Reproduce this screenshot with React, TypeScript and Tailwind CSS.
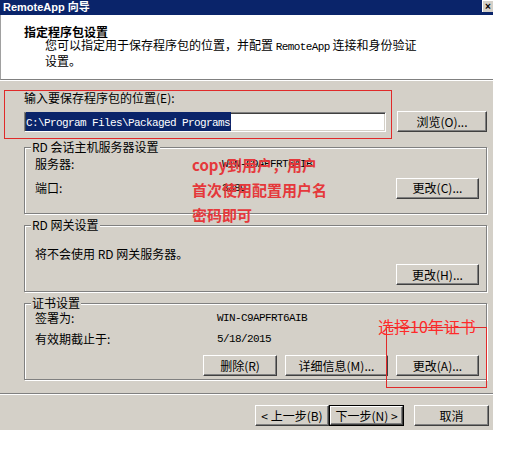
import { ReactNode } from 'react';

// Windows 经典风格的对话框（RemoteApp 向导）
const cjk = "font-['Noto_Sans_CJK_SC',sans-serif]";

function Btn({ children, w, def }: { children: ReactNode; w: string; def?: boolean }) {
    const face = (
        <div className="flex h-full w-full items-center justify-center border border-t-white border-r-[#404040] border-b-[#404040] border-l-white text-[12px] leading-[14px] text-black shadow-[inset_-1px_-1px_0_#808080]">
            {children}
        </div>
    );
    if (def) return <div className={`h-[21px] border border-black ${w}`}>{face}</div>;
    return <div className={`h-[21px] ${w}`}>{face}</div>;
}

function Mono({ children }: { children: ReactNode }) {
    return <span className="font-['Liberation_Mono',monospace] text-[11px] tracking-[-0.6px]">{children}</span>;
}

function Group({ title, children, className }: { title: string; children: ReactNode; className: string }) {
    return (
        <fieldset className={`border border-[#808080] pr-[7px] pl-[10px] shadow-[1px_1px_0_#fff,inset_1px_1px_0_#fff] ${className}`}>
            <legend className="ml-[-4px] bg-[#d4d0c8] px-[1px] text-[12px] leading-[14px]">{title}</legend>
            {children}
        </fieldset>
    );
}

export default function App() {
    return (
        <div className={`relative h-[451px] w-[513px] overflow-hidden bg-white text-black ${cjk}`}>
            <div className="flex w-[493px] flex-col">
                {/* 标题栏 */}
                <div className="flex h-[15px] items-start justify-between bg-[#0a246a]">
                    <span className="pt-[1px] pl-[3px] font-['Liberation_Sans','Noto_Sans_CJK_SC',sans-serif] text-[11px] leading-[13px] font-bold text-white">RemoteApp 向导</span>
                    <div className="flex h-[12px] w-[11px] items-center justify-center border-t border-l border-white bg-[#d4d0c8] font-['Liberation_Sans',sans-serif] text-[10px] leading-none font-bold">×</div>
                </div>

                {/* 头部 */}
                <div className="h-[65px] border-b border-l border-b-[#808080] border-l-[#a0a0a0] bg-white pt-[10px] pl-[23px]">
                    <div className="text-[12px] leading-[13px] font-bold">指定程序包设置</div>
                    <div className="pl-[21px] text-[12px] leading-[14px]">
                        <div>
                            您可以指定用于保存程序包的位置，并配置 <Mono>RemoteApp</Mono> 连接和身份验证
                        </div>
                        <div>设置。</div>
                    </div>
                </div>

                {/* 主体 */}
                <div className="border-t border-white bg-[#d4d0c8]">
                    <div className="pt-[10px] pr-[6px] pl-[24px]">
                        <div className="text-[12px] leading-[14px]">输入要保存程序包的位置(E):</div>
                        <div className="mt-[6px] flex items-center">
                            <div className="flex h-[20px] w-[362px] items-center border border-t-[#808080] border-r-white border-b-white border-l-[#808080] bg-white pl-[1px] shadow-[inset_1px_1px_0_#404040,inset_-1px_-1px_0_#d4d0c8]">
                                <span className="bg-[#0a246a] pr-[1px] leading-[15px] text-white">
                                    <Mono>C:\Program Files\Packaged Programs</Mono>
                                </span>
                            </div>
                            <div className="ml-auto">
                                <Btn w="w-[90px]">浏览(O)...</Btn>
                            </div>
                        </div>

                        <Group title="RD 会话主机服务器设置" className="mt-[8px] pb-[15px]">
                            <div className="flex h-[20px] items-center text-[12px]">
                                <span className="w-[187px]">服务器:</span>
                                <Mono>WIN-C9APFRT6AIB</Mono>
                            </div>
                            <div className="mt-[4px] flex h-[20px] items-center text-[12px]">
                                <span className="w-[187px]">端口:</span>
                                <Mono>3389</Mono>
                                <div className="ml-auto">
                                    <Btn w="w-[83px]">更改(C)...</Btn>
                                </div>
                            </div>
                        </Group>

                        <Group title="RD 网关设置" className="mt-[4px] pb-[6px]">
                            <div className="mt-[15px] text-[12px] leading-[14px]">将不会使用 RD 网关服务器。</div>
                            <div className="mt-[3px] flex justify-end">
                                <Btn w="w-[83px]">更改(H)...</Btn>
                            </div>
                        </Group>

                        <Group title="证书设置" className="mt-[4px] pb-[3px]">
                            <div className="mt-[1px] flex h-[14px] items-center text-[12px]">
                                <span className="w-[182px]">签署为:</span>
                                <Mono>WIN-C9APFRT6AIB</Mono>
                            </div>
                            <div className="mt-[7px] flex h-[14px] items-center text-[12px]">
                                <span className="w-[182px]">有效期截止于:</span>
                                <Mono>5/18/2015</Mono>
                            </div>
                            <div className="mt-[9px] flex justify-end gap-[8px]">
                                <Btn w="w-[74px]">删除(R)</Btn>
                                <Btn w="w-[103px]">详细信息(M)...</Btn>
                                <Btn w="w-[83px]">更改(A)...</Btn>
                            </div>
                        </Group>
                    </div>

                    {/* 底部按钮 */}
                    <div className="mt-[13px] border-t border-b border-t-[#808080] border-b-white" />
                    <div className="mt-[10px] flex justify-end pr-[4px] pb-[4px]">
                        <Btn w="w-[74px]">&lt; 上一步(B)</Btn>
                        <Btn w="w-[75px]" def>
                            下一步(N) &gt;
                        </Btn>
                        <div className="ml-[10px]">
                            <Btn w="w-[75px]">取消</Btn>
                        </div>
                    </div>
                </div>
            </div>

            {/* 红色标注 */}
            <div className="absolute top-[90px] left-[4px] h-[49px] w-[388px] border border-[#e02a2a]" />
            <div className="absolute top-[327px] left-[386px] h-[61px] w-[101px] border border-[#e02a2a]" />
            <div className="absolute top-[316px] left-[378px] text-[16px] leading-[20px] text-[#ff2a2a]">选择10年证书</div>
            <div className="absolute top-[152px] left-[192px] text-[15px] leading-[25px] font-bold text-[#e5383b]">
                <div>copy到用户，用户</div>
                <div>首次使用配置用户名</div>
                <div>密码即可</div>
            </div>
        </div>
    );
}
